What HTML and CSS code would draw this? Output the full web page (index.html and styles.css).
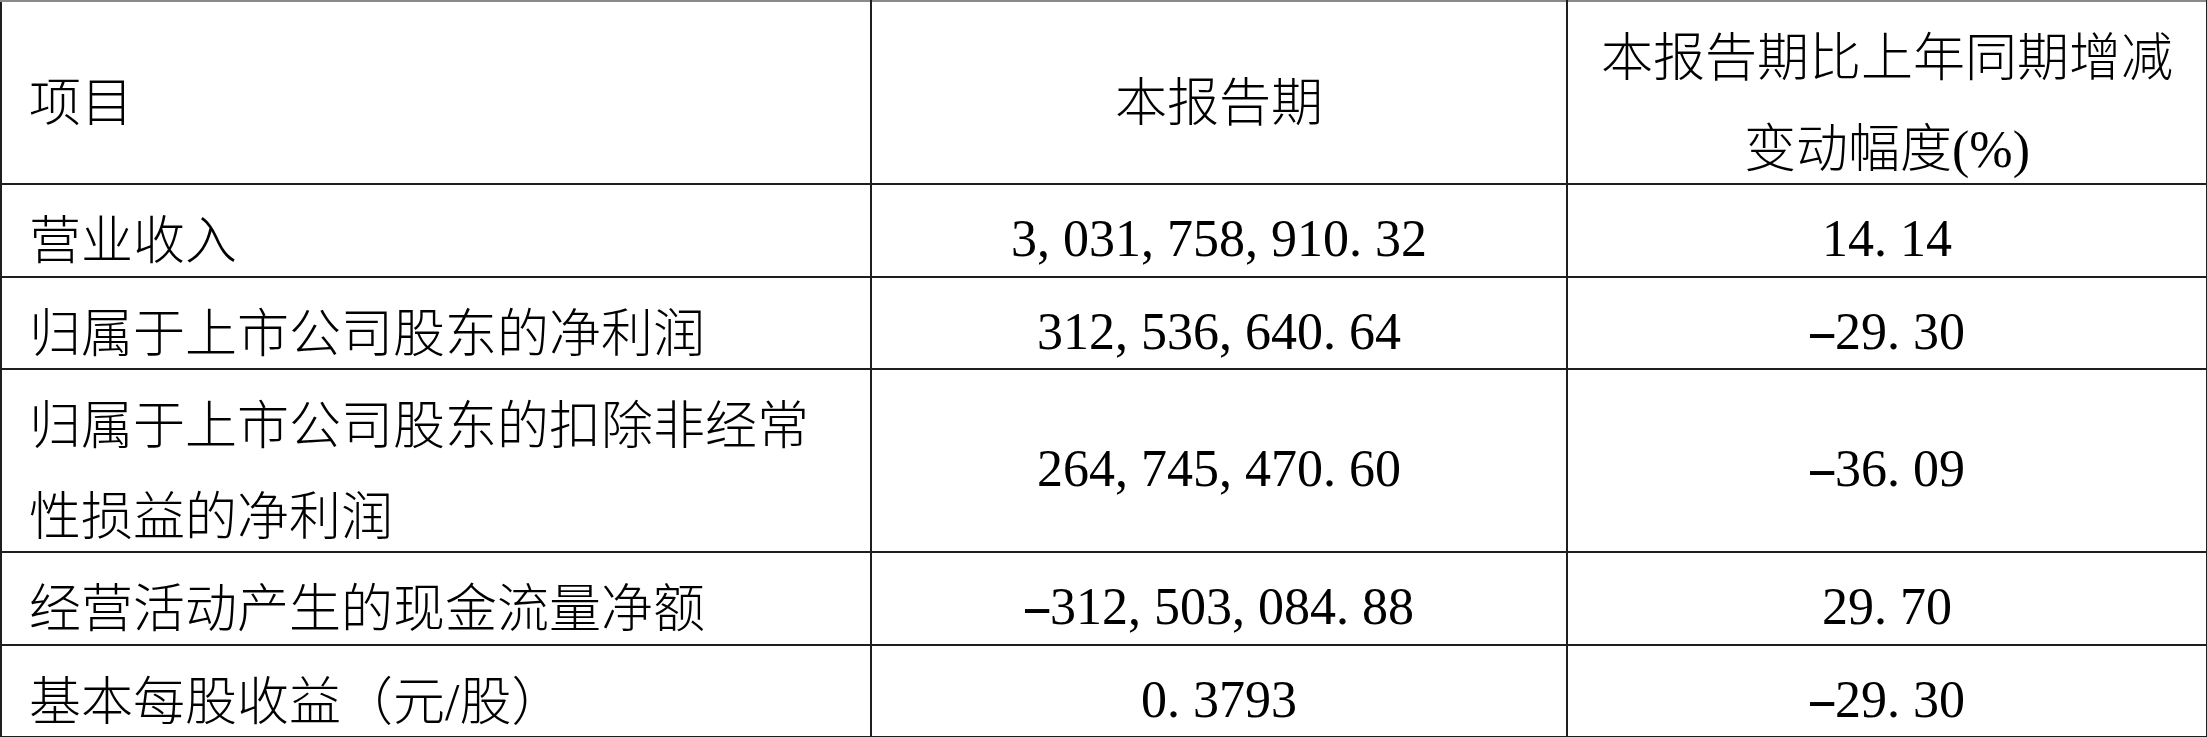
FILE: index.html
```html
<!DOCTYPE html>
<html lang="zh-CN">
<head>
<meta charset="utf-8">
<title>主要会计数据</title>
<link rel="stylesheet" href="styles.css">
</head>
<body>
<table class="fin">
  <colgroup>
    <col class="c1">
    <col class="c2">
    <col class="c3">
  </colgroup>
  <tr>
    <td class="name"><div class="t">项目</div></td>
    <td class="mid"><div class="t">本报告期</div></td>
    <td class="mid"><div class="t">本报告期比上年同期增减<br>变动幅度<span class="lat">(%)</span></div></td>
  </tr>
  <tr>
    <td class="name"><div class="t">营业收入</div></td>
    <td class="num"><div class="t">3<span class="p">,</span>031<span class="p">,</span>758<span class="p">,</span>910<span class="p">.</span>32</div></td>
    <td class="num"><div class="t">14<span class="p">.</span>14</div></td>
  </tr>
  <tr>
    <td class="name"><div class="t">归属于上市公司股东的净利润</div></td>
    <td class="num"><div class="t">312<span class="p">,</span>536<span class="p">,</span>640<span class="p">.</span>64</div></td>
    <td class="num"><div class="t"><span class="m">-</span>29<span class="p">.</span>30</div></td>
  </tr>
  <tr>
    <td class="name"><div class="t">归属于上市公司股东的扣除非经常<br>性损益的净利润</div></td>
    <td class="num"><div class="t">264<span class="p">,</span>745<span class="p">,</span>470<span class="p">.</span>60</div></td>
    <td class="num"><div class="t"><span class="m">-</span>36<span class="p">.</span>09</div></td>
  </tr>
  <tr>
    <td class="name"><div class="t">经营活动产生的现金流量净额</div></td>
    <td class="num"><div class="t"><span class="m">-</span>312<span class="p">,</span>503<span class="p">,</span>084<span class="p">.</span>88</div></td>
    <td class="num"><div class="t">29<span class="p">.</span>70</div></td>
  </tr>
  <tr>
    <td class="name"><div class="t">基本每股收益（元<span class="lat">/</span>股）</div></td>
    <td class="num"><div class="t">0<span class="p">.</span>3793</div></td>
    <td class="num"><div class="t"><span class="m">-</span>29<span class="p">.</span>30</div></td>
  </tr>
</table>
</body>
</html>
```
FILE: styles.css
```css
html, body {
  margin: 0;
  padding: 0;
  background: #ffffff;
}

.fin {
  border-collapse: collapse;
  table-layout: fixed;
  width: 2206px;
  color: #000000;
  font-family: "Noto Sans CJK SC", "Liberation Serif", serif;
  font-weight: 300;
  font-size: 52px;
  line-height: 90.5px;
  border-top: 2px solid #8a8a8a;
}

.c1 { width: 870px; }
.c2 { width: 696px; }
.c3 { width: 640px; }

.fin td {
  border: 2px solid #1e1e1e;
  padding: 0;
  vertical-align: middle;
  white-space: nowrap;
}

.fin tr:first-child td {
  border-top-color: #8a8a8a;
}

.t {
  padding-top: 7px;
  margin-bottom: -7px;
}

.name {
  text-align: left;
  padding-left: 27px !important;
}

.mid {
  text-align: center;
}

.lat {
  font-family: "Liberation Serif", serif;
  font-weight: 400;
  line-height: 1;
}

.num {
  text-align: center;
  font-family: "Liberation Serif", "Noto Sans CJK SC", serif;
  font-weight: 400;
}

.num .t {
  padding-top: 9px;
  margin-bottom: -9px;
}

.p {
  display: inline-block;
  width: 0.5em;
  text-align: left;
}

.m {
  display: inline-block;
  width: 0.5em;
  text-align: center;
  transform: scaleX(1.8);
}
```
